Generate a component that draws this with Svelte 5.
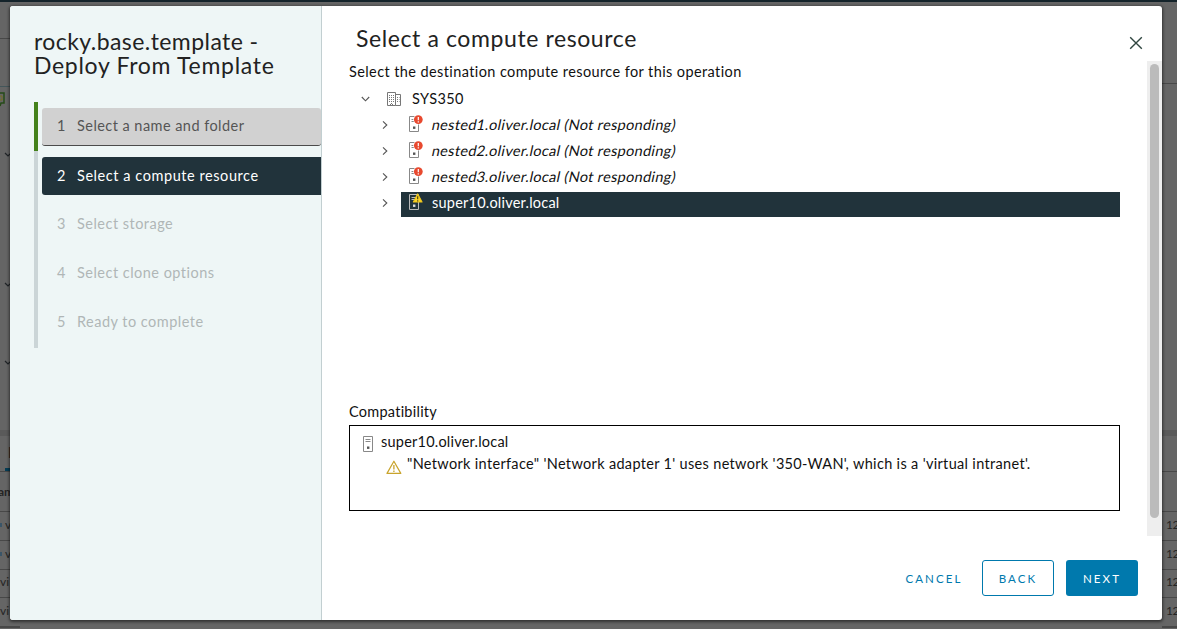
<script>
  const steps = [
    { n: 1, label: 'Select a name and folder', state: 'done' },
    { n: 2, label: 'Select a compute resource', state: 'current' },
    { n: 3, label: 'Select storage', state: 'todo' },
    { n: 4, label: 'Select clone options', state: 'todo' },
    { n: 5, label: 'Ready to complete', state: 'todo' }
  ];
  const hosts = [
    { name: 'nested1.oliver.local (Not responding)', alert: 'error' },
    { name: 'nested2.oliver.local (Not responding)', alert: 'error' },
    { name: 'nested3.oliver.local (Not responding)', alert: 'error' },
    { name: 'super10.oliver.local', alert: 'warning' }
  ];
</script>

{#snippet hostIcon(alert)}
  <svg class="host-icon" width="17" height="18" viewBox="0 0 17 18">
    <path class="case" d="M1.5 1.5H10.5V16.5H1.5Z" />
    <path class="detail" d="M3.5 4.5H8.5M3.5 6.5H8.5" />
    <rect class="dot" x="5" y="11.5" width="2.4" height="2.4" />
    {#if alert === 'error'}
      <circle cx="10.3" cy="4.6" r="5" fill="#fff" />
      <circle cx="10.3" cy="4.6" r="4.4" fill="#e8492f" />
      <path d="M10.3 2V5.2M10.3 6.2V7.4" stroke="#fff" stroke-width="1.2" />
    {:else if alert === 'warning'}
      <path d="M9.7 1L14 9H5.4Z" fill="#fbd527" stroke="#edc51c" stroke-width="1.2" stroke-linejoin="round" />
      <path d="M9.7 3.3V6.2M9.7 7.2V8.4" stroke="#3c3a18" stroke-width="1.1" />
    {/if}
  </svg>
{/snippet}

{#snippet chevron(open)}
  <svg class="chevron" width="10" height="10" viewBox="0 0 10 10">
    <path d={open ? 'M.8 3L4.5 6.8L8.2 3' : 'M3 1.4L6.8 5L3 8.6'} />
  </svg>
{/snippet}

<div class="screen">
  <div class="backdrop">
    <div class="edge left">
      <div class="cell" style="height:36px"></div>
      <div class="cell line" style="height:48px"></div>
      <div class="cell teal" style="height:344px">
        <svg width="10" height="300" viewBox="0 0 10 300" fill="none">
          <path d="M-2 6H4V16H1L0 19" stroke="#264b18" stroke-width="1.5" />
          <path d="M-1 9H2V13H-1" stroke="#756c20" />
          <path d="M5 66L8 69L11 66M5 196L8 199L11 196M5 274L8 277L11 274" stroke="#202427" stroke-width="1.2" />
        </svg>
      </div>
      <div class="band"></div>
      <div class="cell tab" style="height:35px">I</div>
      <div class="cell line head" style="height:40px">am</div>
      <div class="cell line" style="height:29px"><i></i>v</div>
      <div class="cell line" style="height:29px"><i></i>v</div>
      <div class="cell line" style="height:28px">vi</div>
      <div class="cell line" style="height:29px">vi</div>
      <div class="foot"></div>
    </div>
    <div class="edge right">
      <div class="cell" style="height:81px"></div>
      <div class="cell line" style="height:347px"></div>
      <div class="band"></div>
      <div class="cell" style="height:35px"></div>
      <div class="cell line" style="height:40px"></div>
      <div class="cell line" style="height:29px">12</div>
      <div class="cell line" style="height:29px">12</div>
      <div class="cell line" style="height:28px">12</div>
      <div class="cell line" style="height:29px">12</div>
      <div class="foot"></div>
    </div>
  </div>

  <div class="modal" role="dialog">
    <aside>
      <h1><span>rocky.base.template -</span><span class="second">Deploy From Template</span></h1>
      <ol>
        {#each steps as step}
          <li class={step.state}>
            <div class="step"><b>{step.n}</b><span>{step.label}</span></div>
          </li>
        {/each}
      </ol>
    </aside>

    <main>
      <header>
        <h2>Select a compute resource</h2>
        <button class="close" aria-label="Close">
          <svg width="14" height="14" viewBox="0 0 14 14"><path d="M1.2 1.2L12.8 12.8M12.8 1.2L1.2 12.8" /></svg>
        </button>
      </header>
      <div class="body">
        <div class="content">
          <p class="intro">Select the destination compute resource for this operation</p>
          <div class="tree">
            <div class="root">
              {@render chevron(true)}
              <svg class="dc" width="16" height="16" viewBox="0 0 16 16">
                <path d="M1.5 14.5V1.5H9.5V14.5ZM9.5 3.5H14.5V14.5H9.5" />
                <path d="M3 4.5H8.5M3 6.5H8.5M3 8.5H8.5M3 10.5H8.5" stroke-dasharray="1 1" />
                <path d="M11 6.5H13.5M11 8.5H13.5M11 10.5H13.5M4.5 14V12.5H6.5V14" stroke-dasharray="1 1" />
              </svg>
              <span>SYS350</span>
            </div>
            {#each hosts as host}
              <div class="node">
                {@render chevron(false)}
                <div class="leaf {host.alert}">
                  {@render hostIcon(host.alert)}
                  <span>{host.name}</span>
                </div>
              </div>
            {/each}
          </div>
          <div class="compat-title">Compatibility</div>
          <div class="compat">
            <div class="compat-host">{@render hostIcon('')}<span>super10.oliver.local</span></div>
            <div class="compat-msg">
              <svg width="16" height="16" viewBox="0 0 16 16" fill="none" stroke="#c9a42c">
                <path d="M7.9 2.2L14.8 14.4H1Z" stroke-width="1.2" stroke-linejoin="round" />
                <path d="M7.9 6V10.6M7.9 11.6V13" stroke-width="1.3" />
              </svg>
              <span>"Network interface" 'Network adapter 1' uses network '350-WAN', which is a 'virtual intranet'.</span>
            </div>
          </div>
        </div>
        <div class="scroll"><div class="thumb"></div></div>
      </div>
      <footer>
        <button class="link">CANCEL</button>
        <button class="outline">BACK</button>
        <button class="primary">NEXT</button>
      </footer>
    </main>
  </div>
</div>

<style>
  :global(body) { margin: 0; overflow: hidden; }
  * { box-sizing: border-box; }
  .screen {
    position: relative; width: 1177px; height: 629px; overflow: hidden;
    background: #656565; font: 14.5px/20px Lato, sans-serif; color: #111;
  }
  .backdrop { display: flex; justify-content: space-between; height: 629px; border-top: 2px solid #14232a; }
  .edge { width: 20px; display: flex; flex-direction: column; overflow: hidden; font-size: 12px; color: #242424; }
  .cell { flex: none; display: flex; align-items: center; white-space: nowrap; padding-bottom: 3px; }
  .line { border-top: 1px solid #484848; }
  .teal { border-top: 1px solid #44565a; align-items: flex-start; }
  .band { flex: none; height: 6px; background: #5a5a5a; }
  .tab { padding-left: 8px; font-size: 15px; font-weight: 700; box-shadow: inset 5px 0 #656565, inset 0 -3px #063d55; }
  .head { font-weight: 700; margin-left: -2px; padding-bottom: 0; }
  .cell i { width: 2px; height: 4px; margin-right: 3px; background: #3a5568; }
  .right { width: 15px; }
  .right .cell { padding-left: 4px; font-size: 12px; letter-spacing: -.5px; }
  .foot { height: 3px; border-top: 2px solid #484848; }

  .modal {
    position: absolute; left: 10px; top: 6px; width: 1152px; height: 614px;
    display: flex; background: #fff; border-radius: 3px; overflow: hidden;
    box-shadow: 0 1px 3px 1px rgba(0, 0, 0, .5);
  }
  aside { width: 312px; padding: 23px 0 0 24px; background: #eef6f6; border-right: 1px solid #c2cfd1; }
  h1, h2 { margin: 0; font-weight: 400; color: #222; }
  h1 { height: 73px; font-size: 23px; line-height: 24px; letter-spacing: .43px; white-space: nowrap; }
  h1 span { display: block; }
  h1 .second { letter-spacing: .7px; }
  ol { list-style: none; margin: 0; padding: 0; }
  li { height: 49px; padding: 6px 0 0 4px; border-left: 4px solid #cbd5d7; }
  li:last-child { height: 50px; }
  li.done { border-color: #44811b; }
  .step { display: flex; align-items: center; height: 38px; padding: 0 0 2px 15px; border-radius: 3px 0 0 3px; letter-spacing: .48px; color: #b0b6b6; }
  b { width: 20px; font-weight: 400; }
  .done .step { background: #d1d1d1; color: #555; border-bottom: 1px solid #4b4b4b; border-radius: 3px; padding-bottom: 1px; letter-spacing: .45px; }
  .current .step { background: #21333b; color: #fff; letter-spacing: .56px; padding-bottom: 0; }

  main { flex: 1; display: flex; flex-direction: column; }
  header { height: 55px; display: flex; justify-content: space-between; padding: 18px 19px 0 34px; }
  h2 { font-size: 23px; line-height: 28px; letter-spacing: .6px; }
  button { padding: 0; border: 0; background: none; font: inherit; }
  .close { width: 14px; height: 14px; margin-top: 12px; }
  .close svg { display: block; }
  .close path { stroke: #304640; stroke-width: 1.4; fill: none; }
  .body { display: flex; justify-content: space-between; height: 475px; }
  .content { width: 771px; margin-left: 27px; letter-spacing: .4px; white-space: nowrap; }
  .intro { margin: 0; height: 25px; line-height: 22px; }
  .tree { height: 315px; }
  .root { display: flex; align-items: center; height: 27px; padding: 0 0 1px 12px; }
  .chevron path { fill: none; stroke: #555; stroke-width: 1.1; }
  .dc { margin: 0 10px 0 15px; }
  .dc path { fill: none; stroke: #777; }
  .node { display: flex; align-items: center; height: 26px; padding-left: 31px; }
  .node :global(.chevron) { margin-bottom: 2px; }
  .leaf { display: flex; align-items: center; flex: 1; height: 25px; margin-left: 11px; padding-left: 7px; }
  .leaf :global(.host-icon) { margin-bottom: 4px; }
  .leaf span { margin-left: 7px; margin-bottom: 3px; letter-spacing: .22px; }
  .leaf.error span { transform: skewX(-12deg); letter-spacing: .32px; }
  .host-icon { flex: none; }
  .case { fill: #fff; stroke: #888; }
  .detail { fill: none; stroke: #888; }
  .dot { fill: #555; }
  .warning { background: #21333b; color: #fff; }
  .warning .case { fill: none; stroke: #bbb; }
  .warning .detail { stroke: #bbb; }
  .warning .dot { fill: #ddd; }
  .compat-title { height: 24px; line-height: 22px; letter-spacing: .25px; }
  .compat { height: 86px; padding: 6px 0 0 12px; border: 1px solid #000; }
  .compat-host { display: flex; height: 22px; letter-spacing: .22px; }
  .compat-host :global(.host-icon) { margin-top: 3px; margin-right: 2px; }
  .compat-msg { display: flex; padding-left: 24px; letter-spacing: .325px; }
  .compat-msg svg { flex: none; margin: 5px 5px 0 0; }
  .scroll { width: 15px; background: #eee; padding: 3px 3px 0 3px; }
  .thumb { width: 9px; height: 454px; border-radius: 5px; background: #bbb; }
  footer { display: flex; justify-content: flex-end; gap: 12px; padding: 24px 24px 0 0; }
  footer button { width: 72px; height: 36px; padding-top: 1px; border-radius: 3px; font-size: 11.5px; letter-spacing: 2.1px; color: #0079ad; }
  footer .outline { border: 1px solid #0079ad; }
  footer .primary { background: #0079ad; color: #fff; }
</style>
